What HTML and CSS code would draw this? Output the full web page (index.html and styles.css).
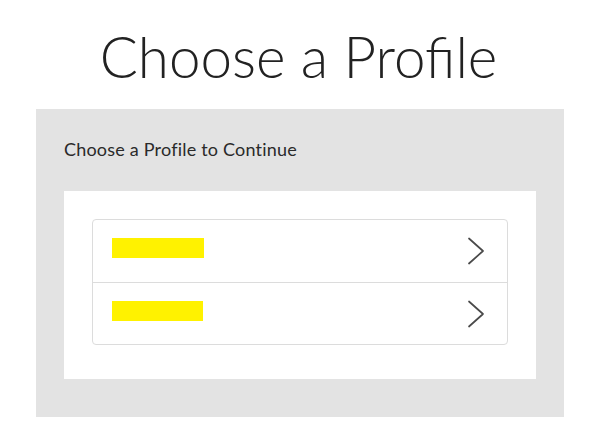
FILE: index.html
```html
<!DOCTYPE html>
<html>
<head>
<meta charset="utf-8">
<link rel="stylesheet" href="styles.css">
</head>
<body>
<h1 class="title">Choose a Profile</h1>
<section class="panel">
  <p class="subtitle">Choose a Profile to Continue</p>
  <div class="card">
    <ul class="list">
      <li class="row">
        <span class="name name-1"></span>
        <svg class="chev" width="18" height="28" viewBox="0 0 18 28"><path d="M2 1.5 L16 14 L2 26.5" fill="none" stroke="#4a4a4a" stroke-width="1.7" stroke-linecap="round" stroke-linejoin="round"/></svg>
      </li>
      <li class="row">
        <span class="name name-2"></span>
        <svg class="chev" width="18" height="28" viewBox="0 0 18 28"><path d="M2 1.5 L16 14 L2 26.5" fill="none" stroke="#4a4a4a" stroke-width="1.7" stroke-linecap="round" stroke-linejoin="round"/></svg>
      </li>
    </ul>
  </div>
</section>
</body>
</html>
```
FILE: styles.css
```css
html, body {
  margin: 0;
  padding: 0;
  background: #fff;
}
body {
  font-family: Lato, "Open Sans", sans-serif;
  color: #222;
}
.title {
  margin: 0;
  height: 109px;
  box-sizing: border-box;
  padding-top: 22px;
  padding-right: 9px;
  font-size: 56.5px;
  font-weight: 300;
  line-height: 68px;
  text-align: center;
  color: #222;
}
.panel {
  margin: 0 42px 0 36px;
  background: #e3e3e3;
  padding: 28px 28px 38px;
}
.subtitle {
  margin: 0 0 30px;
  font-size: 18px;
  letter-spacing: 0.2px;
  font-weight: 400;
  line-height: 24px;
  color: #2a2a2a;
}
.card {
  background: #fff;
  padding: 28px 28px 34px;
}
.list {
  list-style: none;
  margin: 0;
  padding: 0;
  border: 1px solid #dcdcdc;
  border-radius: 4px;
}
.row {
  height: 62px;
  box-sizing: border-box;
  display: flex;
  align-items: flex-start;
  justify-content: space-between;
  padding: 17px 22px 0 19px;
}
.row + .row {
  border-top: 1px solid #dcdcdc;
}
.name {
  display: block;
  margin-top: 1px;
  height: 20px;
  background: #fff200;
}
.name-1 { width: 92px; }
.name-2 { width: 91px; }
.chev { display: block; }
```
